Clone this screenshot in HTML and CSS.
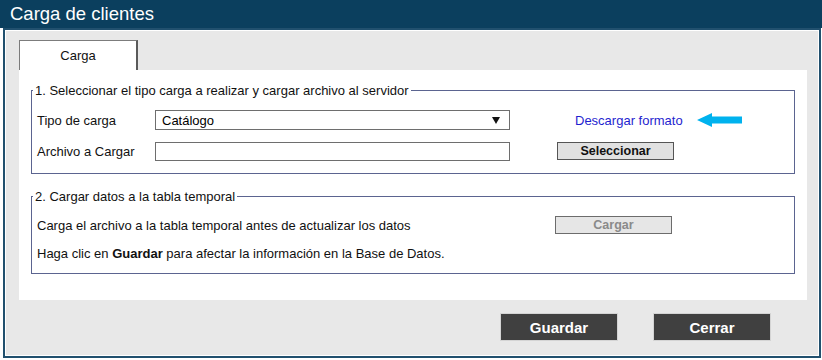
FILE: index.html
```html
<!DOCTYPE html>
<html>
	<head>
		<title>Carga de clientes</title>
		<meta charset="utf-8">
		<link rel="stylesheet" href="styles.css">
	</head>
	<body>
		<div class="title">Carga de clientes</div>
		<div class="panel">
			<div class="tabs">
				<div class="tab">Carga</div>
			</div>
			<div class="tab-body">
				<fieldset class="group group-load">
					<legend>1. Seleccionar el tipo carga a realizar y cargar archivo al servidor</legend>
					<div class="rows rows-load">
						<div class="row">
							<label class="label" for="tipo">Tipo de carga</label>
							<div class="select-wrap">
								<select id="tipo" class="field">
									<option>Catálogo</option>
								</select>
							</div>
							<a class="link" href="#">Descargar formato</a>
							<svg class="arrow" width="45" height="14" viewBox="0 0 45 14">
								<polygon points="0,7 15,0 15,3.5 45,3.5 45,10.5 15,10.5 15,14" fill="#00b2ee"/>
							</svg>
						</div>
						<div class="row">
							<label class="label" for="archivo">Archivo a Cargar</label>
							<input id="archivo" class="field field-file" type="text">
							<button class="btn-small btn-select">Seleccionar</button>
						</div>
					</div>
				</fieldset>
				<fieldset class="group group-temp">
					<legend>2. Cargar datos a la tabla temporal</legend>
					<div class="rows rows-temp">
						<div class="row">
							<span class="text">Carga el archivo a la tabla temporal antes de actualizar los datos</span>
							<button class="btn-small" disabled>Cargar</button>
						</div>
						<div class="row">
							<span>Haga clic en <b>Guardar</b> para afectar la información en la Base de Datos.</span>
						</div>
					</div>
				</fieldset>
			</div>
			<div class="actions">
				<button class="btn-dark">Guardar</button>
				<button class="btn-dark">Cerrar</button>
			</div>
		</div>
	</body>
</html>
```

FILE: styles.css
```css
* {box-sizing:border-box;}
body {margin:0;font-family:"Liberation Sans",Arial,sans-serif;font-size:13px;color:#111;background:#fff;}
.title {height:28px;background:#0b3f5e;color:#fff;font-size:18.5px;line-height:28px;padding-left:10px;}
.panel {margin-left:3px;width:818px;height:330px;background:#e8e8e8;border:2px solid #21506e;box-shadow:inset 0 0 0 1px #fff;padding:10px 12px 15px 14px;}
.tabs {display:flex;}
.tab {width:119px;height:30px;background:#fff;border:1px solid #7c7c7c;border-bottom:0;border-right:2px solid #5a5a5a;text-align:center;line-height:30px;}
.tab-body {background:#fff;height:230px;padding:13px 12px 0 12px;}
.group {margin:0;border:1px solid #5b6490;padding:0 5px;}
.group legend {margin-left:-4px;padding:0 2px;line-height:15px;}
.group-load {padding-top:12px;padding-bottom:12px;}
.group-temp {margin-top:15px;padding-top:11px;padding-bottom:10px;}
.rows {display:flex;flex-direction:column;}
.rows-load {gap:11px;}
.rows-temp {gap:8px;}
.row {display:flex;align-items:center;height:20px;}
.label {width:118px;}
.select-wrap {position:relative;}
.select-wrap::after {content:"";position:absolute;right:10px;top:7px;border-left:4px solid transparent;border-right:4px solid transparent;border-top:7px solid #111;}
.field {width:355px;height:20px;border:1px solid #6e6e6e;background:#fff;font-family:inherit;font-size:13px;color:#000;padding:0 0 0 6px;margin:0;border-radius:0;}
select.field {appearance:none;-webkit-appearance:none;}
.field-file {height:19px;}
.link {margin-left:65px;color:#1f1fcf;text-decoration:none;}
.arrow {margin-left:14px;display:block;}
.btn-small {width:117px;height:18px;padding:0;border:1px solid #555;background:#e1e1e1;font-family:inherit;font-size:12.5px;font-weight:bold;color:#111;}
.btn-small:disabled {color:#8a8a8a;border-color:#6c6c6c;background:#e6e6e6;}
.btn-select {margin-left:47px;}
.text {width:518px;}
.actions {display:flex;justify-content:flex-end;gap:35px;margin-top:13px;padding-right:36px;}
.btn-dark {width:118px;height:28px;background:#404040;border:1px solid #d4d4d4;color:#fff;font-family:inherit;font-size:15px;font-weight:bold;padding:0;}
```
